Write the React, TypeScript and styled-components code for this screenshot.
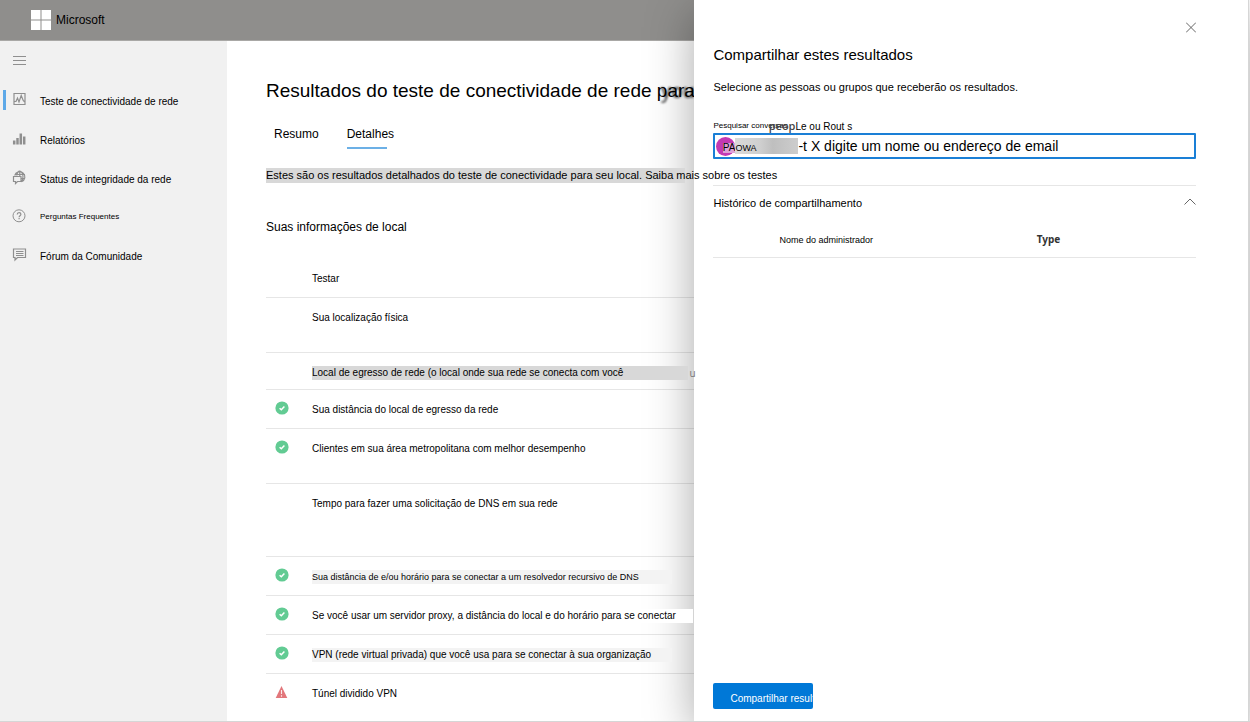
import React from "react";
import styled, { createGlobalStyle, css } from "styled-components";

const GlobalStyle = createGlobalStyle`
  *, *::before, *::after { box-sizing: border-box; }
  body {
    margin: 0;
    background: #fff;
    color: #000;
    font-family: "Liberation Sans", Arial, sans-serif;
    font-size: 10px;
    line-height: 16px;
  }
  h1, h2, p, ul { margin: 0; padding: 0; font-weight: 400; }
  button, input { font: inherit; color: inherit; border: 0; padding: 0; background: none; }
`;

const Page = styled.div`
  display: grid;
  grid-template-columns: minmax(0, 5fr) minmax(0, 4fr);
  min-height: 100vh;
  overflow: hidden;
  border-bottom: 1px solid #d6d6d6;
`;

const Site = styled.div`
  display: flex;
  flex-direction: column;
  min-width: 0;
`;

const Header = styled.header`
  display: flex;
  align-items: center;
  gap: 5px;
  height: 41px;
  padding-left: 31px;
  background: #8f8e8c;
  border-bottom: 1px solid #a9a8a6;
  font-size: 12px;
`;

const Logo = styled.svg`
  width: 20px;
  height: 20px;
`;

const Body = styled.div`
  display: flex;
  flex: 1;
`;

const Sidebar = styled.nav`
  flex: 0 0 227px;
  background: #f1f1f1;
  ul { list-style: none; }
`;

const MenuButton = styled.button`
  display: flex;
  align-items: center;
  height: 39px;
  padding-left: 13px;
`;

const NavLink = styled.a<{ $active?: boolean; $small?: boolean }>`
  display: flex;
  align-items: center;
  gap: 13px;
  height: ${(p) => (p.$small ? 38 : 39)}px;
  margin-left: 3px;
  padding-left: 9px;
  color: #000;
  text-decoration: none;
  font-size: ${(p) => (p.$small ? 8 : 10)}px;
  span { padding-top: ${(p) => (p.$small ? 2 : 4)}px; }
  ${(p) =>
    p.$active &&
    css`
      background: linear-gradient(#5ea9e8, #5ea9e8) left center / 3px 20px no-repeat;
    `}
`;

const NavIcon = styled.svg`
  flex: none;
  width: 15px;
  height: 15px;
  fill: none;
  stroke: #8f8f8f;
  stroke-width: 1.2;
`;

const Main = styled.main`
  flex: 1;
  min-width: 0;
  padding: 38px 0 0 39px;
  white-space: nowrap;
`;

const Title = styled.h1`
  position: relative;
  font-size: 19px;
  line-height: 24px;
`;

const Ghost = styled.span`
  position: absolute;
  left: 395px;
  top: 0;
  color: #555;
  font-family: "Open Sans", sans-serif;
  font-weight: 600;
  filter: blur(1px);
  z-index: -1;
`;

const Tabs = styled.div`
  display: flex;
  gap: 28px;
  padding: 22px 0 0 8px;
`;

const Tab = styled.button<{ $active?: boolean }>`
  height: 24px;
  padding-bottom: 6px;
  font-size: 12px;
  background: ${(p) =>
    p.$active
      ? "linear-gradient(#6cb0e6, #6cb0e6) left bottom / 40px 2px no-repeat"
      : "none"};
`;

const Intro = styled.p`
  position: relative;
  z-index: 2;
  margin-top: 19px;
  font-size: 11px;
  line-height: 15px;
  background: linear-gradient(90deg, #d8d8d8 98%, transparent 98%);
`;

const SectionTitle = styled.h2`
  margin-top: 36px;
  font-size: 12px;
`;

const Results = styled.table`
  width: 100%;
  margin-top: 24px;
  border-collapse: separate;
  border-spacing: 0;
  td, th {
    padding: 12px 0 0;
    font-weight: 400;
    text-align: left;
    vertical-align: top;
    border-bottom: 1px solid #e6e6e6;
  }
  td:first-child { width: 46px; padding: 11px 0 0 9px; }
  tr:last-child td { border-bottom: 0; }
`;

const ResultRow = styled.tr<{ $height: number }>`
  height: ${(p) => p.$height}px;
`;

const Name = styled.span<{ $fill?: string; $small?: boolean }>`
  position: relative;
  z-index: 2;
  display: block;
  line-height: 14px;
  margin: 1px ${(p) => (p.$fill === "#fff" ? 1 : p.$fill === "#d8d8d8" ? 6 : 22)}px 0 0;
  font-size: ${(p) => (p.$small ? 9 : 10)}px;
  background: ${(p) => p.$fill ?? "transparent"};
`;

const NameTail = styled.span`
  position: absolute;
  left: 100%;
  padding-left: 1px;
  color: #777;
  font-family: "Open Sans", sans-serif;
`;

const StatusIcon = styled.svg`
  display: block;
  width: 14px;
  height: 14px;
`;

const Panel = styled.aside`
  position: relative;
  z-index: 1;
  display: flex;
  flex-direction: column;
  margin-right: 1px;
  padding: 19px 52px 12px 19px;
  background: #fff;
  border-right: 1px solid #d6d6d6;
  box-shadow: 0 12px 44px rgba(0, 0, 0, 0.34);
  white-space: nowrap;
`;

const IconButton = styled.button`
  display: flex;
`;

const CloseButton = styled(IconButton)`
  align-self: flex-end;
`;

const LineIcon = styled.svg`
  fill: none;
  stroke: #666;
`;

const PanelTitle = styled.h2`
  margin-top: 10px;
  font-size: 15px;
  line-height: 20px;
`;

const Hint = styled.p`
  margin-top: 14px;
  font-size: 11px;
`;

const FieldLabel = styled.label`
  display: flex;
  align-items: center;
  height: 14px;
  margin-top: 24px;
  font-size: 8px;
  line-height: 14px;
`;

const LabelStrong = styled.span`
  margin-left: -19px;
  color: #444;
  font-family: "Open Sans", sans-serif;
  font-size: 11px;
  font-weight: 600;
`;

const LabelRest = styled.span`
  padding-top: 2px;
  font-size: 10px;
`;

const Field = styled.div`
  display: flex;
  align-items: center;
  height: 26px;
  padding-left: 1px;
  border: 2px solid #1a7fd6;
  border-radius: 1px;
`;

const Avatar = styled.span`
  display: flex;
  align-items: center;
  justify-content: flex-end;
  width: 19px;
  height: 19px;
  border-radius: 50%;
  background: #c239b3;
  span { margin-top: 3px; line-height: 10px; background: #dca0d6; }
`;

const Chip = styled.span`
  width: 63px;
  height: 16px;
  padding-top: 2px;
  font-size: 9px;
  background: linear-gradient(90deg, #dadada, #cfcfcf 40%, #bfbfbf 60%, #cdcdcd);
`;

const Search = styled.input`
  flex: 1;
  min-width: 0;
  height: 22px;
  font-size: 14px;
  outline: none;
`;

const HistoryHeader = styled.div`
  display: flex;
  align-items: center;
  justify-content: space-between;
  margin-top: 26px;
  padding-top: 9px;
  border-top: 1px solid #e6e6e6;
  font-size: 11px;
`;

const History = styled.table`
  width: 100%;
  margin-top: 17px;
  border-spacing: 0;
  th {
    height: 30px;
    padding: 4px 0 0;
    vertical-align: top;
    text-align: left;
    font-size: 9px;
    font-weight: 400;
    border-bottom: 1px solid #e6e6e6;
  }
  th:first-child { width: 67%; padding-left: 66px; }
  th:last-child { padding-top: 3px; font: 700 10px/16px "Noto Sans", sans-serif; color: #333; }
`;

const ShareButton = styled.button`
  width: 100px;
  height: 26px;
  margin-top: auto;
  padding: 5px 0 0 17px;
  overflow: hidden;
  text-align: left;
  color: #fff;
  background: #0078d7;
  border-radius: 2px;
`;

type Status = "ok" | "warn" | undefined;

const rows: {
  name: string;
  h: number;
  status?: Status;
  fill?: string;
  small?: boolean;
  tail?: string;
}[] = [
  { name: "Sua localização física", h: 55 },
  { name: "Local de egresso de rede (o local onde sua rede se conecta com você", h: 37, fill: "#d8d8d8", tail: "u" },
  { name: "Sua distância do local de egresso da rede", h: 39, status: "ok" },
  { name: "Clientes em sua área metropolitana com melhor desempenho", h: 55, status: "ok" },
  { name: "Tempo para fazer uma solicitação de DNS em sua rede", h: 73 },
  { name: "Sua distância de e/ou horário para se conectar a um resolvedor recursivo de DNS", h: 39, status: "ok", fill: "#f3f3f3", small: true },
  { name: "Se você usar um servidor proxy, a distância do local e do horário para se conectar", h: 39, status: "ok", fill: "#fff" },
  { name: "VPN (rede virtual privada) que você usa para se conectar à sua organização", h: 39, status: "ok", fill: "#f3f3f3" },
  { name: "Túnel dividido VPN", h: 38, status: "warn" },
];

const StatusMark = ({ status }: { status: Status }) => {
  if (status === "ok")
    return (
      <StatusIcon viewBox="0 0 14 14" aria-label="Aprovado">
        <circle cx="7" cy="7" r="6.6" fill="#62cb93" />
        <path d="M4.6 7.2l1.7 1.6 3.1-3.4" fill="none" stroke="#fff" strokeWidth="1.5" />
      </StatusIcon>
    );
  if (status === "warn")
    return (
      <StatusIcon viewBox="0 0 14 14" aria-label="Aviso">
        <path d="M6.5 1L12.3 13H.7z" fill="#e2777b" />
        <path d="M6.5 5v4M6.5 10.3v1.4" stroke="#fbe9e9" strokeWidth="1.1" />
      </StatusIcon>
    );
  return null;
};

export default function App() {
  return (
    <>
      <GlobalStyle />
      <Page>
        <Site>
          <Header>
            <Logo viewBox="0 0 20 20" aria-hidden="true">
              <path d="M0 0h9.5v9.5H0zM10.5 0H20v9.5h-9.5zM0 10.5h9.5V20H0zM10.5 10.5H20V20h-9.5z" fill="#fff" />
            </Logo>
            <span>Microsoft</span>
          </Header>
          <Body>
            <Sidebar>
              <MenuButton aria-label="Menu">
                <NavIcon viewBox="0 0 15 15">
                  <path d="M0 3.500h13M0 7.500h13M0 11.500h13" strokeWidth="1" />
                </NavIcon>
              </MenuButton>
              <ul>
                <li>
                  <NavLink href="#teste" $active>
                    <NavIcon viewBox="0 0 15 15">
                      <path d="M2 1.500h11v11H2zM2 9.500h2l1.500-3.500 1.500 4 2.200-6.500 2 5 2 2" />
                    </NavIcon>
                    <span>Teste de conectividade de rede</span>
                  </NavLink>
                </li>
                <li>
                  <NavLink href="#relatorios">
                    <NavIcon viewBox="0 0 15 15">
                      <g strokeWidth="2.500">
                        <path d="M2.200 9.500v4M5.500 7v6.500M8.800 2.500v11M12.200 5.500v8" />
                      </g>
                    </NavIcon>
                    <span>Relatórios</span>
                  </NavLink>
                </li>
                <li>
                  <NavLink href="#status">
                    <NavIcon viewBox="0 0 15 15">
                      <path d="M2.700 5.500A5.200 5.200 0 1 1 9.500 11.800M3 4.500h10M9.500 8.500h3.500M4.800 5.500C5.200 2.500 6.500 1.200 7.800 1.200S11 3.500 11 6.500 10.200 11 9.300 11.700M7.800 1.200v5M1.500 6.500h7.500v5H5.500l-2 2v-2h-2z" />
                    </NavIcon>
                    <span>Status de integridade da rede</span>
                  </NavLink>
                </li>
                <li>
                  <NavLink href="#perguntas" $small>
                    <NavIcon viewBox="0 0 15 15">
                      <circle cx="7" cy="6.800" r="6" strokeWidth="1" />
                      <path d="M5.200 5.500c0-2.600 3.700-2.400 3.700-.2 0 1.500-1.800 1.500-1.800 3M7.100 9.100v1.200" />
                    </NavIcon>
                    <span>Perguntas Frequentes</span>
                  </NavLink>
                </li>
                <li>
                  <NavLink href="#forum">
                    <NavIcon viewBox="0 0 15 15">
                      <path d="M1.500 2h12v8.500H5.500L3 13v-2.500H1.500zM4 4.500h7.500M4 6.500h7.500M4 8.500h7.500" />
                    </NavIcon>
                    <span>Fórum da Comunidade</span>
                  </NavLink>
                </li>
              </ul>
            </Sidebar>
            <Main>
              <Title>
                Resultados do teste de conectividade de rede para
                <Ghost>you</Ghost>
              </Title>
              <Tabs>
                <Tab>Resumo</Tab>
                <Tab $active>Detalhes</Tab>
              </Tabs>
              <Intro>
                Estes são os resultados detalhados do teste de conectividade para seu local. Saiba mais sobre os testes
              </Intro>
              <SectionTitle>Suas informações de local</SectionTitle>
              <Results>
                <tbody>
                  <ResultRow $height={39}>
                    <td />
                    <th scope="col">Testar</th>
                  </ResultRow>
                  {rows.map((r) => (
                    <ResultRow key={r.name} $height={r.h}>
                      <td>
                        <StatusMark status={r.status} />
                      </td>
                      <td>
                        <Name $fill={r.fill} $small={r.small}>
                          {r.name}
                          {r.tail && <NameTail>{r.tail}</NameTail>}
                        </Name>
                      </td>
                    </ResultRow>
                  ))}
                </tbody>
              </Results>
            </Main>
          </Body>
        </Site>
        <Panel>
          <CloseButton aria-label="Fechar">
            <LineIcon width="10" height="16" viewBox="0 0 10 16">
              <path d="M0 3.500l10 10M10 3.500l-10 10" />
            </LineIcon>
          </CloseButton>
          <PanelTitle>Compartilhar estes resultados</PanelTitle>
          <Hint>Selecione as pessoas ou grupos que receberão os resultados.</Hint>
          <FieldLabel htmlFor="pessoas">
            Pesquisar conversas
            <LabelStrong>peop</LabelStrong>
            <LabelRest>Le ou Rout s</LabelRest>
          </FieldLabel>
          <Field>
            <Avatar>
              <span>PA</span>
            </Avatar>
            <Chip>OWA</Chip>
            <Search id="pessoas" defaultValue="-t X digite um nome ou endereço de email" />
          </Field>
          <HistoryHeader>
            <span>Histórico de compartilhamento</span>
            <IconButton aria-label="Recolher">
              <LineIcon width="12" height="10" viewBox="0 0 12 10">
                <path d="M.5 6.500L6 1l5.500 5.500" />
              </LineIcon>
            </IconButton>
          </HistoryHeader>
          <History>
            <thead>
              <tr>
                <th scope="col">Nome do administrador</th>
                <th scope="col">Type</th>
              </tr>
            </thead>
          </History>
          <ShareButton>Compartilhar resultados</ShareButton>
        </Panel>
      </Page>
    </>
  );
}
